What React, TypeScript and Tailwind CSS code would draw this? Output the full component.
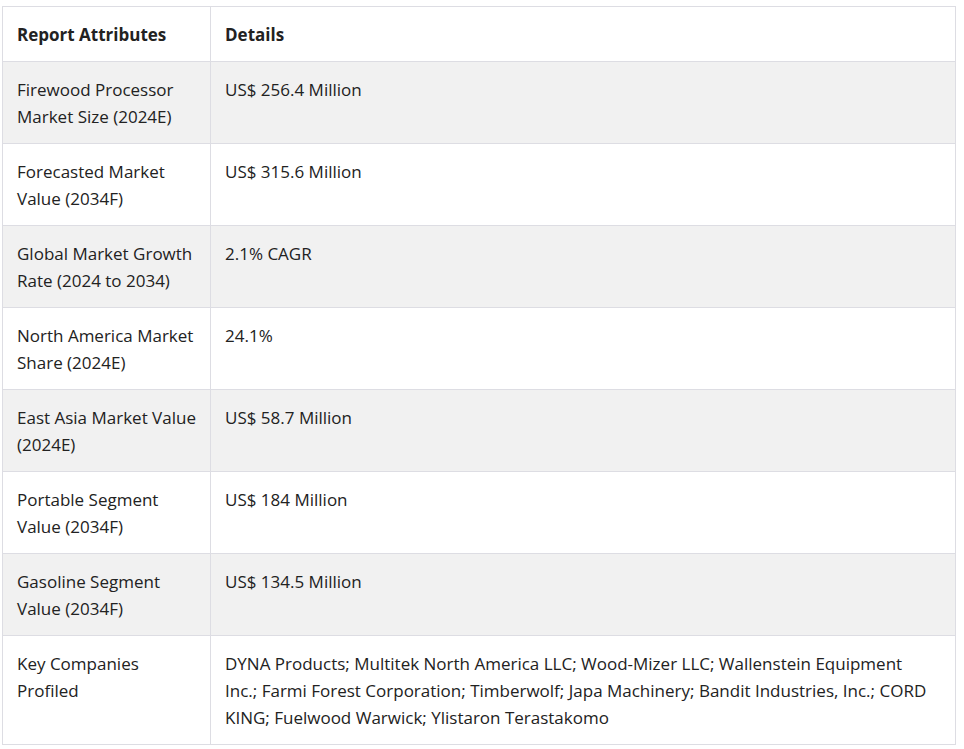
const rows: [string, string][] = [
  ["Firewood Processor Market Size (2024E)", "US$ 256.4 Million"],
  ["Forecasted Market Value (2034F)", "US$ 315.6 Million"],
  ["Global Market Growth Rate (2024 to 2034)", "2.1% CAGR"],
  ["North America Market Share (2024E)", "24.1%"],
  ["East Asia Market Value (2024E)", "US$ 58.7 Million"],
  ["Portable Segment Value (2034F)", "US$ 184 Million"],
  ["Gasoline Segment Value (2034F)", "US$ 134.5 Million"],
  [
    "Key Companies Profiled",
    "DYNA Products; Multitek North America LLC; Wood-Mizer LLC; Wallenstein Equipment Inc.; Farmi Forest Corporation; Timberwolf; Japa Machinery; Bandit Industries, Inc.; CORD KING; Fuelwood Warwick; Ylistaron Terastakomo",
  ],
];

export default function App() {
  return (
    <div className="min-h-[749px] bg-white pl-[2px] pt-[6px] font-['Open_Sans',sans-serif] text-[17px] leading-[27px] text-[#222]">
      <table className="w-[954px] border-collapse">
        <thead>
          <tr>
            <th className="w-[208px] border border-[#dddde3] px-[14px] pt-[14px] pb-[13px] text-left font-bold">Report Attributes</th>
            <th className="border border-[#dddde3] pl-[14px] pr-[18px] pt-[14px] pb-[13px] text-left font-bold">Details</th>
          </tr>
        </thead>
        <tbody>
          {rows.map(([a, b], i) => (
            <tr key={a} className={i % 2 === 0 ? "bg-[#f1f1f1]" : "bg-white"}>
              <td className="border border-[#dddde3] px-[14px] pt-[14px] pb-[13px] align-top">{a}</td>
              <td className="border border-[#dddde3] pl-[14px] pr-[18px] pt-[14px] pb-[13px] align-top">{b}</td>
            </tr>
          ))}
        </tbody>
      </table>
    </div>
  );
}
